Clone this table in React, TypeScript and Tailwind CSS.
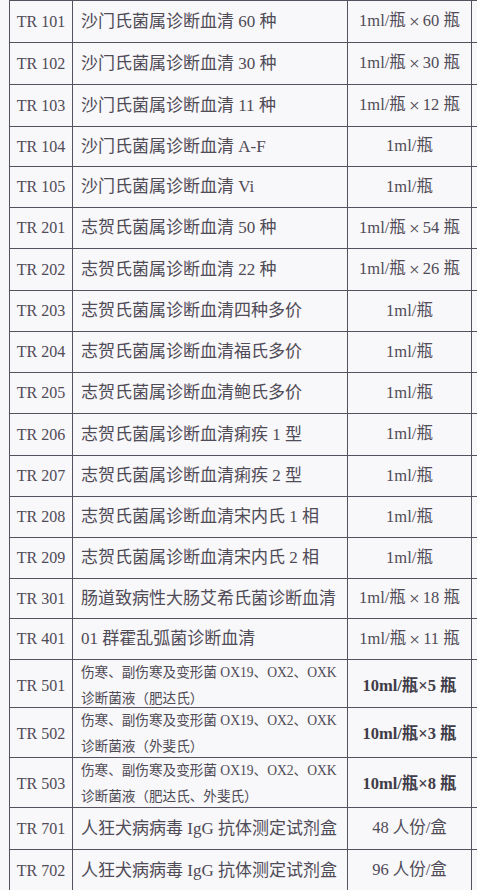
import { FC, ReactNode } from 'react';

interface Row {
	code: string;
	name: string[];
	spec: string;
	h: number;
	bold?: boolean;
	small?: boolean;
}

const rows: Row[] = [
	{ code: 'TR 101', name: ['沙门氏菌属诊断血清 60 种'], spec: '1ml/瓶×60 瓶', h: 42 },
	{ code: 'TR 102', name: ['沙门氏菌属诊断血清 30 种'], spec: '1ml/瓶×30 瓶', h: 42 },
	{ code: 'TR 103', name: ['沙门氏菌属诊断血清 11 种'], spec: '1ml/瓶×12 瓶', h: 42 },
	{ code: 'TR 104', name: ['沙门氏菌属诊断血清 A-F'], spec: '1ml/瓶', h: 40 },
	{ code: 'TR 105', name: ['沙门氏菌属诊断血清 Vi'], spec: '1ml/瓶', h: 41 },
	{ code: 'TR 201', name: ['志贺氏菌属诊断血清 50 种'], spec: '1ml/瓶×54 瓶', h: 41 },
	{ code: 'TR 202', name: ['志贺氏菌属诊断血清 22 种'], spec: '1ml/瓶×26 瓶', h: 42 },
	{ code: 'TR 203', name: ['志贺氏菌属诊断血清四种多价'], spec: '1ml/瓶', h: 41 },
	{ code: 'TR 204', name: ['志贺氏菌属诊断血清福氏多价'], spec: '1ml/瓶', h: 41 },
	{ code: 'TR 205', name: ['志贺氏菌属诊断血清鲍氏多价'], spec: '1ml/瓶', h: 41 },
	{ code: 'TR 206', name: ['志贺氏菌属诊断血清痢疾 1 型'], spec: '1ml/瓶', h: 42 },
	{ code: 'TR 207', name: ['志贺氏菌属诊断血清痢疾 2 型'], spec: '1ml/瓶', h: 41 },
	{ code: 'TR 208', name: ['志贺氏菌属诊断血清宋内氏 1 相'], spec: '1ml/瓶', h: 41 },
	{ code: 'TR 209', name: ['志贺氏菌属诊断血清宋内氏 2 相'], spec: '1ml/瓶', h: 41 },
	{ code: 'TR 301', name: ['肠道致病性大肠艾希氏菌诊断血清'], spec: '1ml/瓶×18 瓶', h: 40 },
	{ code: 'TR 401', name: ['01 群霍乱弧菌诊断血清'], spec: '1ml/瓶×11 瓶', h: 41 },
	{
		code: 'TR 501',
		name: ['伤寒、副伤寒及变形菌 OX19、OX2、OXK', '诊断菌液（肥达氏）'],
		spec: '10ml/瓶×5 瓶',
		h: 48,
		bold: true,
		small: true,
	},
	{
		code: 'TR 502',
		name: ['伤寒、副伤寒及变形菌 OX19、OX2、OXK', '诊断菌液（外斐氏）'],
		spec: '10ml/瓶×3 瓶',
		h: 50,
		bold: true,
		small: true,
	},
	{
		code: 'TR 503',
		name: ['伤寒、副伤寒及变形菌 OX19、OX2、OXK', '诊断菌液（肥达氏、外斐氏）'],
		spec: '10ml/瓶×8 瓶',
		h: 50,
		bold: true,
		small: true,
	},
	{ code: 'TR 701', name: ['人狂犬病病毒 IgG 抗体测定试剂盒'], spec: '48 人份/盒', h: 42 },
	{ code: 'TR 702', name: ['人狂犬病病毒 IgG 抗体测定试剂盒'], spec: '96 人份/盒', h: 42 },
];

// split latin / cjk runs, × drawn full width like the scanned song font
const Mixed: FC<{ text: string; wideX?: boolean }> = ({ text, wideX = true }) => {
	const parts = text.match(/[\x20-\x7E]+|×|[^\x20-\x7E×]+/g) ?? [];
	return (
		<>
			{parts.map((p, i): ReactNode =>
				p === '×' && wideX ? (
					<span key={i} className="inline-block w-[17px] text-center text-[19px] leading-none">
						×
					</span>
				) : (
					<span key={i} className="whitespace-pre">
						{p}
					</span>
				),
			)}
		</>
	);
};

export default function App() {
	return (
		<div className="h-[890px] w-[477px] overflow-hidden bg-[#f8f7f9] text-[#4f4b57] font-['Liberation_Serif','Noto_Sans_CJK_SC',serif]">
			<div className="ml-[9px] w-[490px] border-t-[1.5px] border-[#56515e]">
				{rows.map((r) => (
					<div
						key={r.code}
						className="grid grid-cols-[64px_275px_124px_1fr] border-b-[1.5px] border-[#56515e]"
						style={{ height: r.h }}
					>
						<div className="flex items-center justify-center border-x-[1.5px] border-[#56515e] text-[16px]">
							<Mixed text={r.code} />
						</div>
						<div
							className={`flex flex-col justify-center border-r-[1.5px] border-[#56515e] pl-[8px] ${
								r.small ? 'text-[13.6px] leading-[26px]' : 'text-[17px]'
							}`}
						>
							{r.name.map((n) => (
								<div key={n} className="whitespace-nowrap">
									<Mixed text={n} />
								</div>
							))}
						</div>
						<div className="flex items-center justify-center border-r-[1.5px] border-[#56515e] text-[16.5px]">
							{r.bold ? (
								<span className="font-bold text-[#403c48]">
									<Mixed text={r.spec} wideX={false} />
								</span>
							) : (
								<Mixed text={r.spec} />
							)}
						</div>
						<div />
					</div>
				))}
			</div>
		</div>
	);
}
